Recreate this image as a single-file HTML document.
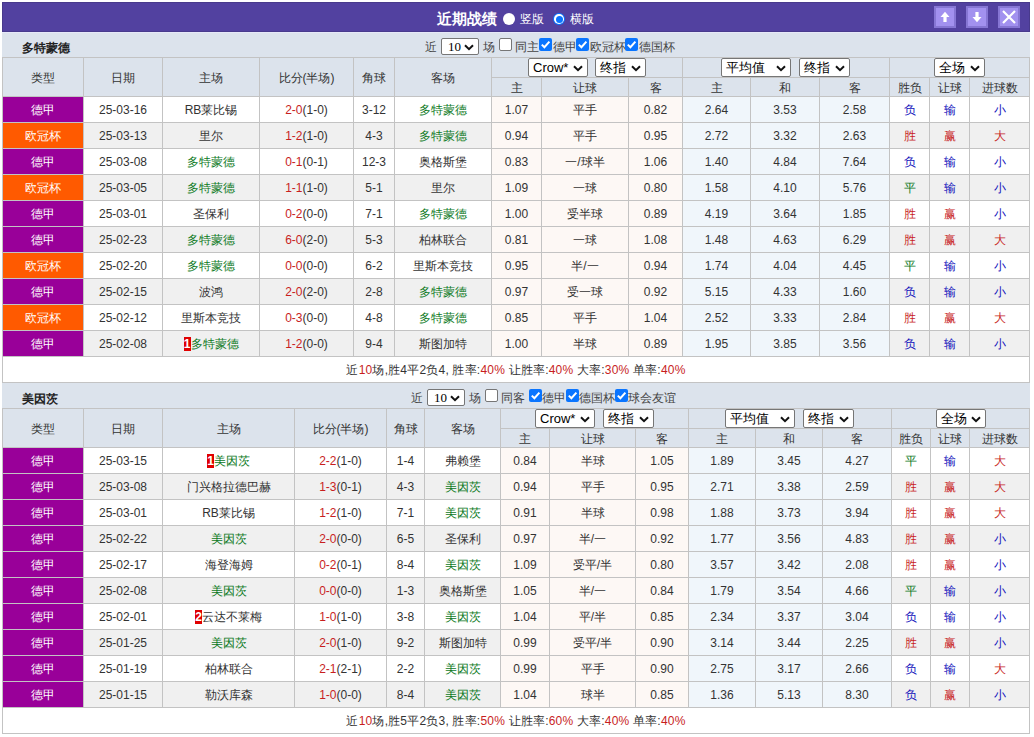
<!DOCTYPE html>
<html><head><meta charset="utf-8"><style>
*{margin:0;padding:0;box-sizing:content-box;}
html,body{width:1034px;height:737px;overflow:hidden;background:#fff;}
body{position:relative;font-family:"Liberation Sans",sans-serif;font-size:12px;color:#333333;}
body>div{position:absolute;}
.t{text-align:center;white-space:nowrap;overflow:visible;}
.g{color:#0d7a1d;}
.r{color:#c81e1e;}
.b{color:#1111bb;}
.bd{display:inline-block;background:#e00000;color:#fff;font-weight:bold;font-size:12px;line-height:14px;padding:0;width:7px;text-align:center;vertical-align:middle;margin-top:-2px;}
.sel{position:absolute;background:#fff;border:1px solid #767676;border-radius:2px;color:#000;}
.sel span{position:absolute;left:4px;top:0;white-space:nowrap;}
.cb{position:absolute;width:11px;height:11px;border:1px solid #767676;border-radius:2px;background:#fff;}
.cb.on{width:13px;height:13px;border:none;background:#0a75ff;}
.cb svg{position:absolute;left:0;top:0;}
</style></head>
<body>
<div style="left:2px;top:2px;width:1028px;height:30px;background:#5241a0;box-shadow:inset 0 0 0 1px #483a8c;"></div><div class="t" style="left:437px;top:4px;width:62px;height:30px;line-height:30px;color:#fff;font-weight:bold;font-size:15px;text-align:left;">近期战绩</div><div style="left:503px;top:13px;width:12px;height:12px;border-radius:50%;background:#fff;"></div><div class="t" style="left:520px;top:4px;width:30px;height:30px;line-height:30px;color:#fff;font-size:12px;text-align:left;">竖版</div><div style="left:553px;top:13px;width:12px;height:12px;border-radius:50%;background:#0a75ff;box-sizing:border-box;"></div><div style="left:554.2px;top:14.2px;width:9.6px;height:9.6px;border-radius:50%;background:#fff;"></div><div style="left:555.5px;top:15.5px;width:7px;height:7px;border-radius:50%;background:#0a75ff;"></div><div class="t" style="left:570px;top:4px;width:30px;height:30px;line-height:30px;color:#fff;font-size:12px;text-align:left;">横版</div><div style="left:934px;top:6px;width:18px;height:18px;border:2px solid #8676d4;background:#a291ef;"></div><svg style="left:934px;top:6px;position:absolute" width="22" height="22" viewBox="0 0 22 22"><path d="M6.5 11 L11 5.8 L15.5 11 L12.6 11 L12.6 16 L9.4 16 L9.4 11 Z" fill="#fff"/></svg><div style="left:966px;top:6px;width:18px;height:18px;border:2px solid #8676d4;background:#a291ef;"></div><svg style="left:966px;top:6px;position:absolute" width="22" height="22" viewBox="0 0 22 22"><path d="M6.5 11 L11 16.2 L15.5 11 L12.6 11 L12.6 6 L9.4 6 L9.4 11 Z" fill="#fff"/></svg><div style="left:998px;top:6px;width:18px;height:18px;border:2px solid #8676d4;background:#a291ef;"></div><svg style="left:998px;top:6px;position:absolute" width="22" height="22" viewBox="0 0 22 22"><path d="M5 5 L17 17 M17 5 L5 17" stroke="#fff" stroke-width="2.2"/></svg><div style="left:2px;top:32px;width:1028px;height:25px;background:#dce3ec;"></div><div class="t" style="left:22px;top:36px;width:80px;height:24px;line-height:24px;font-weight:bold;color:#222;text-align:left;font-size:12px;">多特蒙德</div><div class="t" style="left:425px;top:35px;width:14px;height:24px;line-height:24px;text-align:left;color:#444;">近</div><div class="sel" style="left:441px;top:38px;width:36px;height:15px;"><span style="font-size:13px;line-height:15px;font-family:Liberation Serif;left:6px;">10</span><svg width="10" height="7" viewBox="0 0 10 7" style="position:absolute;right:4px;top:5px"><path d="M1 1.2 L5 5.2 L9 1.2" fill="none" stroke="#111" stroke-width="2"/></svg></div><div class="t" style="left:483px;top:35px;width:14px;height:24px;line-height:24px;text-align:left;color:#444;">场</div><div class="cb" style="left:499px;top:38px;"></div><div class="t" style="left:515px;top:35px;width:26px;height:24px;line-height:24px;text-align:left;color:#444;">同主</div><div class="cb on" style="left:539px;top:38px;"><svg width="13" height="13" viewBox="0 0 13 13"><path d="M2.8 6.6 L5.4 9.2 L10.4 3.6" fill="none" stroke="#fff" stroke-width="2"/></svg></div><div class="t" style="left:553px;top:35px;width:26px;height:24px;line-height:24px;text-align:left;color:#444;">德甲</div><div class="cb on" style="left:576px;top:38px;"><svg width="13" height="13" viewBox="0 0 13 13"><path d="M2.8 6.6 L5.4 9.2 L10.4 3.6" fill="none" stroke="#fff" stroke-width="2"/></svg></div><div class="t" style="left:590px;top:35px;width:38px;height:24px;line-height:24px;text-align:left;color:#444;">欧冠杯</div><div class="cb on" style="left:625px;top:38px;"><svg width="13" height="13" viewBox="0 0 13 13"><path d="M2.8 6.6 L5.4 9.2 L10.4 3.6" fill="none" stroke="#fff" stroke-width="2"/></svg></div><div class="t" style="left:639px;top:35px;width:38px;height:24px;line-height:24px;text-align:left;color:#444;">德国杯</div><div style="left:2px;top:57px;width:1028px;height:39px;background:#dce3ec;"></div><div style="left:2px;top:96px;width:1028px;height:26px;background:#fff;"></div><div style="left:3px;top:97px;width:80px;height:25px;background:#990099;"></div><div style="left:492px;top:97px;width:190px;height:25px;background:#fdf8f5;"></div><div style="left:683px;top:97px;width:206px;height:25px;background:#f0f6fb;"></div><div style="left:2px;top:122px;width:1028px;height:26px;background:#f0f0f0;"></div><div style="left:3px;top:123px;width:80px;height:25px;background:#ff5a00;"></div><div style="left:492px;top:123px;width:190px;height:25px;background:#fdf8f5;"></div><div style="left:683px;top:123px;width:206px;height:25px;background:#f0f6fb;"></div><div style="left:2px;top:148px;width:1028px;height:26px;background:#fff;"></div><div style="left:3px;top:149px;width:80px;height:25px;background:#990099;"></div><div style="left:492px;top:149px;width:190px;height:25px;background:#fdf8f5;"></div><div style="left:683px;top:149px;width:206px;height:25px;background:#f0f6fb;"></div><div style="left:2px;top:174px;width:1028px;height:26px;background:#f0f0f0;"></div><div style="left:3px;top:175px;width:80px;height:25px;background:#ff5a00;"></div><div style="left:492px;top:175px;width:190px;height:25px;background:#fdf8f5;"></div><div style="left:683px;top:175px;width:206px;height:25px;background:#f0f6fb;"></div><div style="left:2px;top:200px;width:1028px;height:26px;background:#fff;"></div><div style="left:3px;top:201px;width:80px;height:25px;background:#990099;"></div><div style="left:492px;top:201px;width:190px;height:25px;background:#fdf8f5;"></div><div style="left:683px;top:201px;width:206px;height:25px;background:#f0f6fb;"></div><div style="left:2px;top:226px;width:1028px;height:26px;background:#f0f0f0;"></div><div style="left:3px;top:227px;width:80px;height:25px;background:#990099;"></div><div style="left:492px;top:227px;width:190px;height:25px;background:#fdf8f5;"></div><div style="left:683px;top:227px;width:206px;height:25px;background:#f0f6fb;"></div><div style="left:2px;top:252px;width:1028px;height:26px;background:#fff;"></div><div style="left:3px;top:253px;width:80px;height:25px;background:#ff5a00;"></div><div style="left:492px;top:253px;width:190px;height:25px;background:#fdf8f5;"></div><div style="left:683px;top:253px;width:206px;height:25px;background:#f0f6fb;"></div><div style="left:2px;top:278px;width:1028px;height:26px;background:#f0f0f0;"></div><div style="left:3px;top:279px;width:80px;height:25px;background:#990099;"></div><div style="left:492px;top:279px;width:190px;height:25px;background:#fdf8f5;"></div><div style="left:683px;top:279px;width:206px;height:25px;background:#f0f6fb;"></div><div style="left:2px;top:304px;width:1028px;height:26px;background:#fff;"></div><div style="left:3px;top:305px;width:80px;height:25px;background:#ff5a00;"></div><div style="left:492px;top:305px;width:190px;height:25px;background:#fdf8f5;"></div><div style="left:683px;top:305px;width:206px;height:25px;background:#f0f6fb;"></div><div style="left:2px;top:330px;width:1028px;height:26px;background:#f0f0f0;"></div><div style="left:3px;top:331px;width:80px;height:25px;background:#990099;"></div><div style="left:492px;top:331px;width:190px;height:25px;background:#fdf8f5;"></div><div style="left:683px;top:331px;width:206px;height:25px;background:#f0f6fb;"></div><div style="left:2px;top:356px;width:1028px;height:26px;background:#fff;"></div><div style="left:2px;top:57px;width:1028px;height:1px;background:#c3c3c3;"></div><div style="left:491px;top:77px;width:538px;height:1px;background:#c3c3c3;"></div><div style="left:2px;top:96px;width:1028px;height:1px;background:#c3c3c3;"></div><div style="left:2px;top:122px;width:1028px;height:1px;background:#c3c3c3;"></div><div style="left:2px;top:148px;width:1028px;height:1px;background:#c3c3c3;"></div><div style="left:2px;top:174px;width:1028px;height:1px;background:#c3c3c3;"></div><div style="left:2px;top:200px;width:1028px;height:1px;background:#c3c3c3;"></div><div style="left:2px;top:226px;width:1028px;height:1px;background:#c3c3c3;"></div><div style="left:2px;top:252px;width:1028px;height:1px;background:#c3c3c3;"></div><div style="left:2px;top:278px;width:1028px;height:1px;background:#c3c3c3;"></div><div style="left:2px;top:304px;width:1028px;height:1px;background:#c3c3c3;"></div><div style="left:2px;top:330px;width:1028px;height:1px;background:#c3c3c3;"></div><div style="left:2px;top:356px;width:1028px;height:1px;background:#c3c3c3;"></div><div style="left:2px;top:382px;width:1028px;height:1px;background:#c3c3c3;"></div><div style="left:2px;top:57px;width:1px;height:326px;background:#c3c3c3;"></div><div style="left:83px;top:57px;width:1px;height:299px;background:#c3c3c3;"></div><div style="left:162px;top:57px;width:1px;height:299px;background:#c3c3c3;"></div><div style="left:259px;top:57px;width:1px;height:299px;background:#c3c3c3;"></div><div style="left:353px;top:57px;width:1px;height:299px;background:#c3c3c3;"></div><div style="left:394px;top:57px;width:1px;height:299px;background:#c3c3c3;"></div><div style="left:491px;top:57px;width:1px;height:299px;background:#c3c3c3;"></div><div style="left:541px;top:77px;width:1px;height:279px;background:#c3c3c3;"></div><div style="left:628px;top:77px;width:1px;height:279px;background:#c3c3c3;"></div><div style="left:682px;top:57px;width:1px;height:299px;background:#c3c3c3;"></div><div style="left:750px;top:77px;width:1px;height:279px;background:#c3c3c3;"></div><div style="left:819px;top:77px;width:1px;height:279px;background:#c3c3c3;"></div><div style="left:889px;top:57px;width:1px;height:299px;background:#c3c3c3;"></div><div style="left:929px;top:77px;width:1px;height:279px;background:#c3c3c3;"></div><div style="left:969px;top:77px;width:1px;height:279px;background:#c3c3c3;"></div><div style="left:1029px;top:57px;width:1px;height:326px;background:#c3c3c3;"></div><div class="t" style="left:3px;top:59px;width:80px;height:38px;line-height:38px;color:#333;">类型</div><div class="t" style="left:84px;top:59px;width:78px;height:38px;line-height:38px;color:#333;">日期</div><div class="t" style="left:163px;top:59px;width:96px;height:38px;line-height:38px;color:#333;">主场</div><div class="t" style="left:260px;top:59px;width:93px;height:38px;line-height:38px;color:#333;">比分(半场)</div><div class="t" style="left:354px;top:59px;width:40px;height:38px;line-height:38px;color:#333;">角球</div><div class="t" style="left:395px;top:59px;width:96px;height:38px;line-height:38px;color:#333;">客场</div><div class="t" style="left:492px;top:79px;width:49px;height:18px;line-height:18px;color:#333;">主</div><div class="t" style="left:542px;top:79px;width:86px;height:18px;line-height:18px;color:#333;">让球</div><div class="t" style="left:629px;top:79px;width:53px;height:18px;line-height:18px;color:#333;">客</div><div class="t" style="left:683px;top:79px;width:67px;height:18px;line-height:18px;color:#333;">主</div><div class="t" style="left:751px;top:79px;width:68px;height:18px;line-height:18px;color:#333;">和</div><div class="t" style="left:820px;top:79px;width:69px;height:18px;line-height:18px;color:#333;">客</div><div class="t" style="left:890px;top:79px;width:39px;height:18px;line-height:18px;color:#333;">胜负</div><div class="t" style="left:930px;top:79px;width:39px;height:18px;line-height:18px;color:#333;">让球</div><div class="t" style="left:970px;top:79px;width:59px;height:18px;line-height:18px;color:#333;">进球数</div><div class="sel" style="left:528px;top:58px;width:58px;height:17px;"><span style="font-size:13px;line-height:17px;">Crow*</span><svg width="10" height="7" viewBox="0 0 10 7" style="position:absolute;right:4px;top:6px"><path d="M1 1.2 L5 5.2 L9 1.2" fill="none" stroke="#111" stroke-width="2"/></svg></div><div class="sel" style="left:595px;top:58px;width:49px;height:17px;"><span style="font-size:13px;line-height:17px;">终指</span><svg width="10" height="7" viewBox="0 0 10 7" style="position:absolute;right:4px;top:6px"><path d="M1 1.2 L5 5.2 L9 1.2" fill="none" stroke="#111" stroke-width="2"/></svg></div><div class="sel" style="left:721px;top:58px;width:68px;height:17px;"><span style="font-size:13px;line-height:17px;">平均值&nbsp;</span><svg width="10" height="7" viewBox="0 0 10 7" style="position:absolute;right:4px;top:6px"><path d="M1 1.2 L5 5.2 L9 1.2" fill="none" stroke="#111" stroke-width="2"/></svg></div><div class="sel" style="left:799px;top:58px;width:49px;height:17px;"><span style="font-size:13px;line-height:17px;">终指</span><svg width="10" height="7" viewBox="0 0 10 7" style="position:absolute;right:4px;top:6px"><path d="M1 1.2 L5 5.2 L9 1.2" fill="none" stroke="#111" stroke-width="2"/></svg></div><div class="sel" style="left:934px;top:58px;width:49px;height:17px;"><span style="font-size:13px;line-height:17px;">全场</span><svg width="10" height="7" viewBox="0 0 10 7" style="position:absolute;right:4px;top:6px"><path d="M1 1.2 L5 5.2 L9 1.2" fill="none" stroke="#111" stroke-width="2"/></svg></div><div class="t" style="left:3px;top:98px;width:80px;height:25px;line-height:25px;color:#fff;">德甲</div><div class="t" style="left:84px;top:98px;width:78px;height:25px;line-height:25px;">25-03-16</div><div class="t" style="left:163px;top:98px;width:96px;height:25px;line-height:25px;">RB莱比锡</div><div class="t" style="left:260px;top:98px;width:93px;height:25px;line-height:25px;"><span class="r">2-0</span>(1-0)</div><div class="t" style="left:354px;top:98px;width:40px;height:25px;line-height:25px;">3-12</div><div class="t" style="left:395px;top:98px;width:96px;height:25px;line-height:25px;"><span class="g">多特蒙德</span></div><div class="t" style="left:492px;top:98px;width:49px;height:25px;line-height:25px;">1.07</div><div class="t" style="left:542px;top:98px;width:86px;height:25px;line-height:25px;">平手</div><div class="t" style="left:629px;top:98px;width:53px;height:25px;line-height:25px;">0.82</div><div class="t" style="left:683px;top:98px;width:67px;height:25px;line-height:25px;">2.64</div><div class="t" style="left:751px;top:98px;width:68px;height:25px;line-height:25px;">3.53</div><div class="t" style="left:820px;top:98px;width:69px;height:25px;line-height:25px;">2.58</div><div class="t" style="left:890px;top:98px;width:39px;height:25px;line-height:25px;"><span class="b">负</span></div><div class="t" style="left:930px;top:98px;width:39px;height:25px;line-height:25px;"><span class="b">输</span></div><div class="t" style="left:970px;top:98px;width:59px;height:25px;line-height:25px;"><span class="b">小</span></div><div class="t" style="left:3px;top:124px;width:80px;height:25px;line-height:25px;color:#fff;">欧冠杯</div><div class="t" style="left:84px;top:124px;width:78px;height:25px;line-height:25px;">25-03-13</div><div class="t" style="left:163px;top:124px;width:96px;height:25px;line-height:25px;">里尔</div><div class="t" style="left:260px;top:124px;width:93px;height:25px;line-height:25px;"><span class="r">1-2</span>(1-0)</div><div class="t" style="left:354px;top:124px;width:40px;height:25px;line-height:25px;">4-3</div><div class="t" style="left:395px;top:124px;width:96px;height:25px;line-height:25px;"><span class="g">多特蒙德</span></div><div class="t" style="left:492px;top:124px;width:49px;height:25px;line-height:25px;">0.94</div><div class="t" style="left:542px;top:124px;width:86px;height:25px;line-height:25px;">平手</div><div class="t" style="left:629px;top:124px;width:53px;height:25px;line-height:25px;">0.95</div><div class="t" style="left:683px;top:124px;width:67px;height:25px;line-height:25px;">2.72</div><div class="t" style="left:751px;top:124px;width:68px;height:25px;line-height:25px;">3.32</div><div class="t" style="left:820px;top:124px;width:69px;height:25px;line-height:25px;">2.63</div><div class="t" style="left:890px;top:124px;width:39px;height:25px;line-height:25px;"><span class="r">胜</span></div><div class="t" style="left:930px;top:124px;width:39px;height:25px;line-height:25px;"><span class="r">赢</span></div><div class="t" style="left:970px;top:124px;width:59px;height:25px;line-height:25px;"><span class="r">大</span></div><div class="t" style="left:3px;top:150px;width:80px;height:25px;line-height:25px;color:#fff;">德甲</div><div class="t" style="left:84px;top:150px;width:78px;height:25px;line-height:25px;">25-03-08</div><div class="t" style="left:163px;top:150px;width:96px;height:25px;line-height:25px;"><span class="g">多特蒙德</span></div><div class="t" style="left:260px;top:150px;width:93px;height:25px;line-height:25px;"><span class="r">0-1</span>(0-1)</div><div class="t" style="left:354px;top:150px;width:40px;height:25px;line-height:25px;">12-3</div><div class="t" style="left:395px;top:150px;width:96px;height:25px;line-height:25px;">奥格斯堡</div><div class="t" style="left:492px;top:150px;width:49px;height:25px;line-height:25px;">0.83</div><div class="t" style="left:542px;top:150px;width:86px;height:25px;line-height:25px;">一/球半</div><div class="t" style="left:629px;top:150px;width:53px;height:25px;line-height:25px;">1.06</div><div class="t" style="left:683px;top:150px;width:67px;height:25px;line-height:25px;">1.40</div><div class="t" style="left:751px;top:150px;width:68px;height:25px;line-height:25px;">4.84</div><div class="t" style="left:820px;top:150px;width:69px;height:25px;line-height:25px;">7.64</div><div class="t" style="left:890px;top:150px;width:39px;height:25px;line-height:25px;"><span class="b">负</span></div><div class="t" style="left:930px;top:150px;width:39px;height:25px;line-height:25px;"><span class="b">输</span></div><div class="t" style="left:970px;top:150px;width:59px;height:25px;line-height:25px;"><span class="b">小</span></div><div class="t" style="left:3px;top:176px;width:80px;height:25px;line-height:25px;color:#fff;">欧冠杯</div><div class="t" style="left:84px;top:176px;width:78px;height:25px;line-height:25px;">25-03-05</div><div class="t" style="left:163px;top:176px;width:96px;height:25px;line-height:25px;"><span class="g">多特蒙德</span></div><div class="t" style="left:260px;top:176px;width:93px;height:25px;line-height:25px;"><span class="r">1-1</span>(1-0)</div><div class="t" style="left:354px;top:176px;width:40px;height:25px;line-height:25px;">5-1</div><div class="t" style="left:395px;top:176px;width:96px;height:25px;line-height:25px;">里尔</div><div class="t" style="left:492px;top:176px;width:49px;height:25px;line-height:25px;">1.09</div><div class="t" style="left:542px;top:176px;width:86px;height:25px;line-height:25px;">一球</div><div class="t" style="left:629px;top:176px;width:53px;height:25px;line-height:25px;">0.80</div><div class="t" style="left:683px;top:176px;width:67px;height:25px;line-height:25px;">1.58</div><div class="t" style="left:751px;top:176px;width:68px;height:25px;line-height:25px;">4.10</div><div class="t" style="left:820px;top:176px;width:69px;height:25px;line-height:25px;">5.76</div><div class="t" style="left:890px;top:176px;width:39px;height:25px;line-height:25px;"><span class="g">平</span></div><div class="t" style="left:930px;top:176px;width:39px;height:25px;line-height:25px;"><span class="b">输</span></div><div class="t" style="left:970px;top:176px;width:59px;height:25px;line-height:25px;"><span class="b">小</span></div><div class="t" style="left:3px;top:202px;width:80px;height:25px;line-height:25px;color:#fff;">德甲</div><div class="t" style="left:84px;top:202px;width:78px;height:25px;line-height:25px;">25-03-01</div><div class="t" style="left:163px;top:202px;width:96px;height:25px;line-height:25px;">圣保利</div><div class="t" style="left:260px;top:202px;width:93px;height:25px;line-height:25px;"><span class="r">0-2</span>(0-0)</div><div class="t" style="left:354px;top:202px;width:40px;height:25px;line-height:25px;">7-1</div><div class="t" style="left:395px;top:202px;width:96px;height:25px;line-height:25px;"><span class="g">多特蒙德</span></div><div class="t" style="left:492px;top:202px;width:49px;height:25px;line-height:25px;">1.00</div><div class="t" style="left:542px;top:202px;width:86px;height:25px;line-height:25px;">受半球</div><div class="t" style="left:629px;top:202px;width:53px;height:25px;line-height:25px;">0.89</div><div class="t" style="left:683px;top:202px;width:67px;height:25px;line-height:25px;">4.19</div><div class="t" style="left:751px;top:202px;width:68px;height:25px;line-height:25px;">3.64</div><div class="t" style="left:820px;top:202px;width:69px;height:25px;line-height:25px;">1.85</div><div class="t" style="left:890px;top:202px;width:39px;height:25px;line-height:25px;"><span class="r">胜</span></div><div class="t" style="left:930px;top:202px;width:39px;height:25px;line-height:25px;"><span class="r">赢</span></div><div class="t" style="left:970px;top:202px;width:59px;height:25px;line-height:25px;"><span class="b">小</span></div><div class="t" style="left:3px;top:228px;width:80px;height:25px;line-height:25px;color:#fff;">德甲</div><div class="t" style="left:84px;top:228px;width:78px;height:25px;line-height:25px;">25-02-23</div><div class="t" style="left:163px;top:228px;width:96px;height:25px;line-height:25px;"><span class="g">多特蒙德</span></div><div class="t" style="left:260px;top:228px;width:93px;height:25px;line-height:25px;"><span class="r">6-0</span>(2-0)</div><div class="t" style="left:354px;top:228px;width:40px;height:25px;line-height:25px;">5-3</div><div class="t" style="left:395px;top:228px;width:96px;height:25px;line-height:25px;">柏林联合</div><div class="t" style="left:492px;top:228px;width:49px;height:25px;line-height:25px;">0.81</div><div class="t" style="left:542px;top:228px;width:86px;height:25px;line-height:25px;">一球</div><div class="t" style="left:629px;top:228px;width:53px;height:25px;line-height:25px;">1.08</div><div class="t" style="left:683px;top:228px;width:67px;height:25px;line-height:25px;">1.48</div><div class="t" style="left:751px;top:228px;width:68px;height:25px;line-height:25px;">4.63</div><div class="t" style="left:820px;top:228px;width:69px;height:25px;line-height:25px;">6.29</div><div class="t" style="left:890px;top:228px;width:39px;height:25px;line-height:25px;"><span class="r">胜</span></div><div class="t" style="left:930px;top:228px;width:39px;height:25px;line-height:25px;"><span class="r">赢</span></div><div class="t" style="left:970px;top:228px;width:59px;height:25px;line-height:25px;"><span class="r">大</span></div><div class="t" style="left:3px;top:254px;width:80px;height:25px;line-height:25px;color:#fff;">欧冠杯</div><div class="t" style="left:84px;top:254px;width:78px;height:25px;line-height:25px;">25-02-20</div><div class="t" style="left:163px;top:254px;width:96px;height:25px;line-height:25px;"><span class="g">多特蒙德</span></div><div class="t" style="left:260px;top:254px;width:93px;height:25px;line-height:25px;"><span class="r">0-0</span>(0-0)</div><div class="t" style="left:354px;top:254px;width:40px;height:25px;line-height:25px;">6-2</div><div class="t" style="left:395px;top:254px;width:96px;height:25px;line-height:25px;">里斯本竞技</div><div class="t" style="left:492px;top:254px;width:49px;height:25px;line-height:25px;">0.95</div><div class="t" style="left:542px;top:254px;width:86px;height:25px;line-height:25px;">半/一</div><div class="t" style="left:629px;top:254px;width:53px;height:25px;line-height:25px;">0.94</div><div class="t" style="left:683px;top:254px;width:67px;height:25px;line-height:25px;">1.74</div><div class="t" style="left:751px;top:254px;width:68px;height:25px;line-height:25px;">4.04</div><div class="t" style="left:820px;top:254px;width:69px;height:25px;line-height:25px;">4.45</div><div class="t" style="left:890px;top:254px;width:39px;height:25px;line-height:25px;"><span class="g">平</span></div><div class="t" style="left:930px;top:254px;width:39px;height:25px;line-height:25px;"><span class="b">输</span></div><div class="t" style="left:970px;top:254px;width:59px;height:25px;line-height:25px;"><span class="b">小</span></div><div class="t" style="left:3px;top:280px;width:80px;height:25px;line-height:25px;color:#fff;">德甲</div><div class="t" style="left:84px;top:280px;width:78px;height:25px;line-height:25px;">25-02-15</div><div class="t" style="left:163px;top:280px;width:96px;height:25px;line-height:25px;">波鸿</div><div class="t" style="left:260px;top:280px;width:93px;height:25px;line-height:25px;"><span class="r">2-0</span>(2-0)</div><div class="t" style="left:354px;top:280px;width:40px;height:25px;line-height:25px;">2-8</div><div class="t" style="left:395px;top:280px;width:96px;height:25px;line-height:25px;"><span class="g">多特蒙德</span></div><div class="t" style="left:492px;top:280px;width:49px;height:25px;line-height:25px;">0.97</div><div class="t" style="left:542px;top:280px;width:86px;height:25px;line-height:25px;">受一球</div><div class="t" style="left:629px;top:280px;width:53px;height:25px;line-height:25px;">0.92</div><div class="t" style="left:683px;top:280px;width:67px;height:25px;line-height:25px;">5.15</div><div class="t" style="left:751px;top:280px;width:68px;height:25px;line-height:25px;">4.33</div><div class="t" style="left:820px;top:280px;width:69px;height:25px;line-height:25px;">1.60</div><div class="t" style="left:890px;top:280px;width:39px;height:25px;line-height:25px;"><span class="b">负</span></div><div class="t" style="left:930px;top:280px;width:39px;height:25px;line-height:25px;"><span class="b">输</span></div><div class="t" style="left:970px;top:280px;width:59px;height:25px;line-height:25px;"><span class="b">小</span></div><div class="t" style="left:3px;top:306px;width:80px;height:25px;line-height:25px;color:#fff;">欧冠杯</div><div class="t" style="left:84px;top:306px;width:78px;height:25px;line-height:25px;">25-02-12</div><div class="t" style="left:163px;top:306px;width:96px;height:25px;line-height:25px;">里斯本竞技</div><div class="t" style="left:260px;top:306px;width:93px;height:25px;line-height:25px;"><span class="r">0-3</span>(0-0)</div><div class="t" style="left:354px;top:306px;width:40px;height:25px;line-height:25px;">4-8</div><div class="t" style="left:395px;top:306px;width:96px;height:25px;line-height:25px;"><span class="g">多特蒙德</span></div><div class="t" style="left:492px;top:306px;width:49px;height:25px;line-height:25px;">0.85</div><div class="t" style="left:542px;top:306px;width:86px;height:25px;line-height:25px;">平手</div><div class="t" style="left:629px;top:306px;width:53px;height:25px;line-height:25px;">1.04</div><div class="t" style="left:683px;top:306px;width:67px;height:25px;line-height:25px;">2.52</div><div class="t" style="left:751px;top:306px;width:68px;height:25px;line-height:25px;">3.33</div><div class="t" style="left:820px;top:306px;width:69px;height:25px;line-height:25px;">2.84</div><div class="t" style="left:890px;top:306px;width:39px;height:25px;line-height:25px;"><span class="r">胜</span></div><div class="t" style="left:930px;top:306px;width:39px;height:25px;line-height:25px;"><span class="r">赢</span></div><div class="t" style="left:970px;top:306px;width:59px;height:25px;line-height:25px;"><span class="r">大</span></div><div class="t" style="left:3px;top:332px;width:80px;height:25px;line-height:25px;color:#fff;">德甲</div><div class="t" style="left:84px;top:332px;width:78px;height:25px;line-height:25px;">25-02-08</div><div class="t" style="left:163px;top:332px;width:96px;height:25px;line-height:25px;"><span class="bd">1</span><span class="g">多特蒙德</span></div><div class="t" style="left:260px;top:332px;width:93px;height:25px;line-height:25px;"><span class="r">1-2</span>(0-0)</div><div class="t" style="left:354px;top:332px;width:40px;height:25px;line-height:25px;">9-4</div><div class="t" style="left:395px;top:332px;width:96px;height:25px;line-height:25px;">斯图加特</div><div class="t" style="left:492px;top:332px;width:49px;height:25px;line-height:25px;">1.00</div><div class="t" style="left:542px;top:332px;width:86px;height:25px;line-height:25px;">半球</div><div class="t" style="left:629px;top:332px;width:53px;height:25px;line-height:25px;">0.89</div><div class="t" style="left:683px;top:332px;width:67px;height:25px;line-height:25px;">1.95</div><div class="t" style="left:751px;top:332px;width:68px;height:25px;line-height:25px;">3.85</div><div class="t" style="left:820px;top:332px;width:69px;height:25px;line-height:25px;">3.56</div><div class="t" style="left:890px;top:332px;width:39px;height:25px;line-height:25px;"><span class="b">负</span></div><div class="t" style="left:930px;top:332px;width:39px;height:25px;line-height:25px;"><span class="b">输</span></div><div class="t" style="left:970px;top:332px;width:59px;height:25px;line-height:25px;"><span class="b">小</span></div><div class="t" style="left:2px;top:358px;width:1028px;height:25px;line-height:25px;letter-spacing:0.2px;">近<span class="r">10</span>场,胜4平2负4, 胜率:<span class="r">40%</span> 让胜率:<span class="r">40%</span> 大率:<span class="r">30%</span> 单率:<span class="r">40%</span></div><div style="left:2px;top:32px;width:1028px;height:1px;background:#e6e8f8;"></div><div style="left:2px;top:383px;width:1028px;height:25px;background:#dce3ec;"></div><div class="t" style="left:22px;top:387px;width:80px;height:24px;line-height:24px;font-weight:bold;color:#222;text-align:left;font-size:12px;">美因茨</div><div class="t" style="left:411px;top:386px;width:14px;height:24px;line-height:24px;text-align:left;color:#444;">近</div><div class="sel" style="left:427px;top:389px;width:36px;height:15px;"><span style="font-size:13px;line-height:15px;font-family:Liberation Serif;left:6px;">10</span><svg width="10" height="7" viewBox="0 0 10 7" style="position:absolute;right:4px;top:5px"><path d="M1 1.2 L5 5.2 L9 1.2" fill="none" stroke="#111" stroke-width="2"/></svg></div><div class="t" style="left:469px;top:386px;width:14px;height:24px;line-height:24px;text-align:left;color:#444;">场</div><div class="cb" style="left:485px;top:389px;"></div><div class="t" style="left:501px;top:386px;width:26px;height:24px;line-height:24px;text-align:left;color:#444;">同客</div><div class="cb on" style="left:529px;top:389px;"><svg width="13" height="13" viewBox="0 0 13 13"><path d="M2.8 6.6 L5.4 9.2 L10.4 3.6" fill="none" stroke="#fff" stroke-width="2"/></svg></div><div class="t" style="left:542px;top:386px;width:26px;height:24px;line-height:24px;text-align:left;color:#444;">德甲</div><div class="cb on" style="left:566px;top:389px;"><svg width="13" height="13" viewBox="0 0 13 13"><path d="M2.8 6.6 L5.4 9.2 L10.4 3.6" fill="none" stroke="#fff" stroke-width="2"/></svg></div><div class="t" style="left:579px;top:386px;width:38px;height:24px;line-height:24px;text-align:left;color:#444;">德国杯</div><div class="cb on" style="left:615px;top:389px;"><svg width="13" height="13" viewBox="0 0 13 13"><path d="M2.8 6.6 L5.4 9.2 L10.4 3.6" fill="none" stroke="#fff" stroke-width="2"/></svg></div><div class="t" style="left:628px;top:386px;width:50px;height:24px;line-height:24px;text-align:left;color:#444;">球会友谊</div><div style="left:2px;top:408px;width:1028px;height:39px;background:#dce3ec;"></div><div style="left:2px;top:447px;width:1028px;height:26px;background:#fff;"></div><div style="left:3px;top:448px;width:80px;height:25px;background:#990099;"></div><div style="left:501px;top:448px;width:187px;height:25px;background:#fdf8f5;"></div><div style="left:689px;top:448px;width:202px;height:25px;background:#f0f6fb;"></div><div style="left:2px;top:473px;width:1028px;height:26px;background:#f0f0f0;"></div><div style="left:3px;top:474px;width:80px;height:25px;background:#990099;"></div><div style="left:501px;top:474px;width:187px;height:25px;background:#fdf8f5;"></div><div style="left:689px;top:474px;width:202px;height:25px;background:#f0f6fb;"></div><div style="left:2px;top:499px;width:1028px;height:26px;background:#fff;"></div><div style="left:3px;top:500px;width:80px;height:25px;background:#990099;"></div><div style="left:501px;top:500px;width:187px;height:25px;background:#fdf8f5;"></div><div style="left:689px;top:500px;width:202px;height:25px;background:#f0f6fb;"></div><div style="left:2px;top:525px;width:1028px;height:26px;background:#f0f0f0;"></div><div style="left:3px;top:526px;width:80px;height:25px;background:#990099;"></div><div style="left:501px;top:526px;width:187px;height:25px;background:#fdf8f5;"></div><div style="left:689px;top:526px;width:202px;height:25px;background:#f0f6fb;"></div><div style="left:2px;top:551px;width:1028px;height:26px;background:#fff;"></div><div style="left:3px;top:552px;width:80px;height:25px;background:#990099;"></div><div style="left:501px;top:552px;width:187px;height:25px;background:#fdf8f5;"></div><div style="left:689px;top:552px;width:202px;height:25px;background:#f0f6fb;"></div><div style="left:2px;top:577px;width:1028px;height:26px;background:#f0f0f0;"></div><div style="left:3px;top:578px;width:80px;height:25px;background:#990099;"></div><div style="left:501px;top:578px;width:187px;height:25px;background:#fdf8f5;"></div><div style="left:689px;top:578px;width:202px;height:25px;background:#f0f6fb;"></div><div style="left:2px;top:603px;width:1028px;height:26px;background:#fff;"></div><div style="left:3px;top:604px;width:80px;height:25px;background:#990099;"></div><div style="left:501px;top:604px;width:187px;height:25px;background:#fdf8f5;"></div><div style="left:689px;top:604px;width:202px;height:25px;background:#f0f6fb;"></div><div style="left:2px;top:629px;width:1028px;height:26px;background:#f0f0f0;"></div><div style="left:3px;top:630px;width:80px;height:25px;background:#990099;"></div><div style="left:501px;top:630px;width:187px;height:25px;background:#fdf8f5;"></div><div style="left:689px;top:630px;width:202px;height:25px;background:#f0f6fb;"></div><div style="left:2px;top:655px;width:1028px;height:26px;background:#fff;"></div><div style="left:3px;top:656px;width:80px;height:25px;background:#990099;"></div><div style="left:501px;top:656px;width:187px;height:25px;background:#fdf8f5;"></div><div style="left:689px;top:656px;width:202px;height:25px;background:#f0f6fb;"></div><div style="left:2px;top:681px;width:1028px;height:26px;background:#f0f0f0;"></div><div style="left:3px;top:682px;width:80px;height:25px;background:#990099;"></div><div style="left:501px;top:682px;width:187px;height:25px;background:#fdf8f5;"></div><div style="left:689px;top:682px;width:202px;height:25px;background:#f0f6fb;"></div><div style="left:2px;top:707px;width:1028px;height:26px;background:#fff;"></div><div style="left:2px;top:408px;width:1028px;height:1px;background:#c3c3c3;"></div><div style="left:500px;top:428px;width:529px;height:1px;background:#c3c3c3;"></div><div style="left:2px;top:447px;width:1028px;height:1px;background:#c3c3c3;"></div><div style="left:2px;top:473px;width:1028px;height:1px;background:#c3c3c3;"></div><div style="left:2px;top:499px;width:1028px;height:1px;background:#c3c3c3;"></div><div style="left:2px;top:525px;width:1028px;height:1px;background:#c3c3c3;"></div><div style="left:2px;top:551px;width:1028px;height:1px;background:#c3c3c3;"></div><div style="left:2px;top:577px;width:1028px;height:1px;background:#c3c3c3;"></div><div style="left:2px;top:603px;width:1028px;height:1px;background:#c3c3c3;"></div><div style="left:2px;top:629px;width:1028px;height:1px;background:#c3c3c3;"></div><div style="left:2px;top:655px;width:1028px;height:1px;background:#c3c3c3;"></div><div style="left:2px;top:681px;width:1028px;height:1px;background:#c3c3c3;"></div><div style="left:2px;top:707px;width:1028px;height:1px;background:#c3c3c3;"></div><div style="left:2px;top:733px;width:1028px;height:1px;background:#c3c3c3;"></div><div style="left:2px;top:408px;width:1px;height:326px;background:#c3c3c3;"></div><div style="left:83px;top:408px;width:1px;height:299px;background:#c3c3c3;"></div><div style="left:162px;top:408px;width:1px;height:299px;background:#c3c3c3;"></div><div style="left:294px;top:408px;width:1px;height:299px;background:#c3c3c3;"></div><div style="left:386px;top:408px;width:1px;height:299px;background:#c3c3c3;"></div><div style="left:424px;top:408px;width:1px;height:299px;background:#c3c3c3;"></div><div style="left:500px;top:408px;width:1px;height:299px;background:#c3c3c3;"></div><div style="left:549px;top:428px;width:1px;height:279px;background:#c3c3c3;"></div><div style="left:635px;top:428px;width:1px;height:279px;background:#c3c3c3;"></div><div style="left:688px;top:408px;width:1px;height:299px;background:#c3c3c3;"></div><div style="left:755px;top:428px;width:1px;height:279px;background:#c3c3c3;"></div><div style="left:822px;top:428px;width:1px;height:279px;background:#c3c3c3;"></div><div style="left:891px;top:408px;width:1px;height:299px;background:#c3c3c3;"></div><div style="left:930px;top:428px;width:1px;height:279px;background:#c3c3c3;"></div><div style="left:969px;top:428px;width:1px;height:279px;background:#c3c3c3;"></div><div style="left:1029px;top:408px;width:1px;height:326px;background:#c3c3c3;"></div><div class="t" style="left:3px;top:410px;width:80px;height:38px;line-height:38px;color:#333;">类型</div><div class="t" style="left:84px;top:410px;width:78px;height:38px;line-height:38px;color:#333;">日期</div><div class="t" style="left:163px;top:410px;width:131px;height:38px;line-height:38px;color:#333;">主场</div><div class="t" style="left:295px;top:410px;width:91px;height:38px;line-height:38px;color:#333;">比分(半场)</div><div class="t" style="left:387px;top:410px;width:37px;height:38px;line-height:38px;color:#333;">角球</div><div class="t" style="left:425px;top:410px;width:75px;height:38px;line-height:38px;color:#333;">客场</div><div class="t" style="left:501px;top:430px;width:48px;height:18px;line-height:18px;color:#333;">主</div><div class="t" style="left:550px;top:430px;width:85px;height:18px;line-height:18px;color:#333;">让球</div><div class="t" style="left:636px;top:430px;width:52px;height:18px;line-height:18px;color:#333;">客</div><div class="t" style="left:689px;top:430px;width:66px;height:18px;line-height:18px;color:#333;">主</div><div class="t" style="left:756px;top:430px;width:66px;height:18px;line-height:18px;color:#333;">和</div><div class="t" style="left:823px;top:430px;width:68px;height:18px;line-height:18px;color:#333;">客</div><div class="t" style="left:892px;top:430px;width:38px;height:18px;line-height:18px;color:#333;">胜负</div><div class="t" style="left:931px;top:430px;width:38px;height:18px;line-height:18px;color:#333;">让球</div><div class="t" style="left:970px;top:430px;width:59px;height:18px;line-height:18px;color:#333;">进球数</div><div class="sel" style="left:535px;top:409px;width:58px;height:17px;"><span style="font-size:13px;line-height:17px;">Crow*</span><svg width="10" height="7" viewBox="0 0 10 7" style="position:absolute;right:4px;top:6px"><path d="M1 1.2 L5 5.2 L9 1.2" fill="none" stroke="#111" stroke-width="2"/></svg></div><div class="sel" style="left:603px;top:409px;width:49px;height:17px;"><span style="font-size:13px;line-height:17px;">终指</span><svg width="10" height="7" viewBox="0 0 10 7" style="position:absolute;right:4px;top:6px"><path d="M1 1.2 L5 5.2 L9 1.2" fill="none" stroke="#111" stroke-width="2"/></svg></div><div class="sel" style="left:725px;top:409px;width:68px;height:17px;"><span style="font-size:13px;line-height:17px;">平均值&nbsp;</span><svg width="10" height="7" viewBox="0 0 10 7" style="position:absolute;right:4px;top:6px"><path d="M1 1.2 L5 5.2 L9 1.2" fill="none" stroke="#111" stroke-width="2"/></svg></div><div class="sel" style="left:803px;top:409px;width:49px;height:17px;"><span style="font-size:13px;line-height:17px;">终指</span><svg width="10" height="7" viewBox="0 0 10 7" style="position:absolute;right:4px;top:6px"><path d="M1 1.2 L5 5.2 L9 1.2" fill="none" stroke="#111" stroke-width="2"/></svg></div><div class="sel" style="left:936px;top:409px;width:48px;height:17px;"><span style="font-size:13px;line-height:17px;">全场</span><svg width="10" height="7" viewBox="0 0 10 7" style="position:absolute;right:4px;top:6px"><path d="M1 1.2 L5 5.2 L9 1.2" fill="none" stroke="#111" stroke-width="2"/></svg></div><div class="t" style="left:3px;top:449px;width:80px;height:25px;line-height:25px;color:#fff;">德甲</div><div class="t" style="left:84px;top:449px;width:78px;height:25px;line-height:25px;">25-03-15</div><div class="t" style="left:163px;top:449px;width:131px;height:25px;line-height:25px;"><span class="bd">1</span><span class="g">美因茨</span></div><div class="t" style="left:295px;top:449px;width:91px;height:25px;line-height:25px;"><span class="r">2-2</span>(1-0)</div><div class="t" style="left:387px;top:449px;width:37px;height:25px;line-height:25px;">1-4</div><div class="t" style="left:425px;top:449px;width:75px;height:25px;line-height:25px;">弗赖堡</div><div class="t" style="left:501px;top:449px;width:48px;height:25px;line-height:25px;">0.84</div><div class="t" style="left:550px;top:449px;width:85px;height:25px;line-height:25px;">半球</div><div class="t" style="left:636px;top:449px;width:52px;height:25px;line-height:25px;">1.05</div><div class="t" style="left:689px;top:449px;width:66px;height:25px;line-height:25px;">1.89</div><div class="t" style="left:756px;top:449px;width:66px;height:25px;line-height:25px;">3.45</div><div class="t" style="left:823px;top:449px;width:68px;height:25px;line-height:25px;">4.27</div><div class="t" style="left:892px;top:449px;width:38px;height:25px;line-height:25px;"><span class="g">平</span></div><div class="t" style="left:931px;top:449px;width:38px;height:25px;line-height:25px;"><span class="b">输</span></div><div class="t" style="left:970px;top:449px;width:59px;height:25px;line-height:25px;"><span class="r">大</span></div><div class="t" style="left:3px;top:475px;width:80px;height:25px;line-height:25px;color:#fff;">德甲</div><div class="t" style="left:84px;top:475px;width:78px;height:25px;line-height:25px;">25-03-08</div><div class="t" style="left:163px;top:475px;width:131px;height:25px;line-height:25px;">门兴格拉德巴赫</div><div class="t" style="left:295px;top:475px;width:91px;height:25px;line-height:25px;"><span class="r">1-3</span>(0-1)</div><div class="t" style="left:387px;top:475px;width:37px;height:25px;line-height:25px;">4-3</div><div class="t" style="left:425px;top:475px;width:75px;height:25px;line-height:25px;"><span class="g">美因茨</span></div><div class="t" style="left:501px;top:475px;width:48px;height:25px;line-height:25px;">0.94</div><div class="t" style="left:550px;top:475px;width:85px;height:25px;line-height:25px;">平手</div><div class="t" style="left:636px;top:475px;width:52px;height:25px;line-height:25px;">0.95</div><div class="t" style="left:689px;top:475px;width:66px;height:25px;line-height:25px;">2.71</div><div class="t" style="left:756px;top:475px;width:66px;height:25px;line-height:25px;">3.38</div><div class="t" style="left:823px;top:475px;width:68px;height:25px;line-height:25px;">2.59</div><div class="t" style="left:892px;top:475px;width:38px;height:25px;line-height:25px;"><span class="r">胜</span></div><div class="t" style="left:931px;top:475px;width:38px;height:25px;line-height:25px;"><span class="r">赢</span></div><div class="t" style="left:970px;top:475px;width:59px;height:25px;line-height:25px;"><span class="r">大</span></div><div class="t" style="left:3px;top:501px;width:80px;height:25px;line-height:25px;color:#fff;">德甲</div><div class="t" style="left:84px;top:501px;width:78px;height:25px;line-height:25px;">25-03-01</div><div class="t" style="left:163px;top:501px;width:131px;height:25px;line-height:25px;">RB莱比锡</div><div class="t" style="left:295px;top:501px;width:91px;height:25px;line-height:25px;"><span class="r">1-2</span>(1-0)</div><div class="t" style="left:387px;top:501px;width:37px;height:25px;line-height:25px;">7-1</div><div class="t" style="left:425px;top:501px;width:75px;height:25px;line-height:25px;"><span class="g">美因茨</span></div><div class="t" style="left:501px;top:501px;width:48px;height:25px;line-height:25px;">0.91</div><div class="t" style="left:550px;top:501px;width:85px;height:25px;line-height:25px;">半球</div><div class="t" style="left:636px;top:501px;width:52px;height:25px;line-height:25px;">0.98</div><div class="t" style="left:689px;top:501px;width:66px;height:25px;line-height:25px;">1.88</div><div class="t" style="left:756px;top:501px;width:66px;height:25px;line-height:25px;">3.73</div><div class="t" style="left:823px;top:501px;width:68px;height:25px;line-height:25px;">3.94</div><div class="t" style="left:892px;top:501px;width:38px;height:25px;line-height:25px;"><span class="r">胜</span></div><div class="t" style="left:931px;top:501px;width:38px;height:25px;line-height:25px;"><span class="r">赢</span></div><div class="t" style="left:970px;top:501px;width:59px;height:25px;line-height:25px;"><span class="r">大</span></div><div class="t" style="left:3px;top:527px;width:80px;height:25px;line-height:25px;color:#fff;">德甲</div><div class="t" style="left:84px;top:527px;width:78px;height:25px;line-height:25px;">25-02-22</div><div class="t" style="left:163px;top:527px;width:131px;height:25px;line-height:25px;"><span class="g">美因茨</span></div><div class="t" style="left:295px;top:527px;width:91px;height:25px;line-height:25px;"><span class="r">2-0</span>(0-0)</div><div class="t" style="left:387px;top:527px;width:37px;height:25px;line-height:25px;">6-5</div><div class="t" style="left:425px;top:527px;width:75px;height:25px;line-height:25px;">圣保利</div><div class="t" style="left:501px;top:527px;width:48px;height:25px;line-height:25px;">0.97</div><div class="t" style="left:550px;top:527px;width:85px;height:25px;line-height:25px;">半/一</div><div class="t" style="left:636px;top:527px;width:52px;height:25px;line-height:25px;">0.92</div><div class="t" style="left:689px;top:527px;width:66px;height:25px;line-height:25px;">1.77</div><div class="t" style="left:756px;top:527px;width:66px;height:25px;line-height:25px;">3.56</div><div class="t" style="left:823px;top:527px;width:68px;height:25px;line-height:25px;">4.83</div><div class="t" style="left:892px;top:527px;width:38px;height:25px;line-height:25px;"><span class="r">胜</span></div><div class="t" style="left:931px;top:527px;width:38px;height:25px;line-height:25px;"><span class="r">赢</span></div><div class="t" style="left:970px;top:527px;width:59px;height:25px;line-height:25px;"><span class="b">小</span></div><div class="t" style="left:3px;top:553px;width:80px;height:25px;line-height:25px;color:#fff;">德甲</div><div class="t" style="left:84px;top:553px;width:78px;height:25px;line-height:25px;">25-02-17</div><div class="t" style="left:163px;top:553px;width:131px;height:25px;line-height:25px;">海登海姆</div><div class="t" style="left:295px;top:553px;width:91px;height:25px;line-height:25px;"><span class="r">0-2</span>(0-1)</div><div class="t" style="left:387px;top:553px;width:37px;height:25px;line-height:25px;">8-4</div><div class="t" style="left:425px;top:553px;width:75px;height:25px;line-height:25px;"><span class="g">美因茨</span></div><div class="t" style="left:501px;top:553px;width:48px;height:25px;line-height:25px;">1.09</div><div class="t" style="left:550px;top:553px;width:85px;height:25px;line-height:25px;">受平/半</div><div class="t" style="left:636px;top:553px;width:52px;height:25px;line-height:25px;">0.80</div><div class="t" style="left:689px;top:553px;width:66px;height:25px;line-height:25px;">3.57</div><div class="t" style="left:756px;top:553px;width:66px;height:25px;line-height:25px;">3.42</div><div class="t" style="left:823px;top:553px;width:68px;height:25px;line-height:25px;">2.08</div><div class="t" style="left:892px;top:553px;width:38px;height:25px;line-height:25px;"><span class="r">胜</span></div><div class="t" style="left:931px;top:553px;width:38px;height:25px;line-height:25px;"><span class="r">赢</span></div><div class="t" style="left:970px;top:553px;width:59px;height:25px;line-height:25px;"><span class="b">小</span></div><div class="t" style="left:3px;top:579px;width:80px;height:25px;line-height:25px;color:#fff;">德甲</div><div class="t" style="left:84px;top:579px;width:78px;height:25px;line-height:25px;">25-02-08</div><div class="t" style="left:163px;top:579px;width:131px;height:25px;line-height:25px;"><span class="g">美因茨</span></div><div class="t" style="left:295px;top:579px;width:91px;height:25px;line-height:25px;"><span class="r">0-0</span>(0-0)</div><div class="t" style="left:387px;top:579px;width:37px;height:25px;line-height:25px;">1-3</div><div class="t" style="left:425px;top:579px;width:75px;height:25px;line-height:25px;">奥格斯堡</div><div class="t" style="left:501px;top:579px;width:48px;height:25px;line-height:25px;">1.05</div><div class="t" style="left:550px;top:579px;width:85px;height:25px;line-height:25px;">半/一</div><div class="t" style="left:636px;top:579px;width:52px;height:25px;line-height:25px;">0.84</div><div class="t" style="left:689px;top:579px;width:66px;height:25px;line-height:25px;">1.79</div><div class="t" style="left:756px;top:579px;width:66px;height:25px;line-height:25px;">3.54</div><div class="t" style="left:823px;top:579px;width:68px;height:25px;line-height:25px;">4.66</div><div class="t" style="left:892px;top:579px;width:38px;height:25px;line-height:25px;"><span class="g">平</span></div><div class="t" style="left:931px;top:579px;width:38px;height:25px;line-height:25px;"><span class="b">输</span></div><div class="t" style="left:970px;top:579px;width:59px;height:25px;line-height:25px;"><span class="b">小</span></div><div class="t" style="left:3px;top:605px;width:80px;height:25px;line-height:25px;color:#fff;">德甲</div><div class="t" style="left:84px;top:605px;width:78px;height:25px;line-height:25px;">25-02-01</div><div class="t" style="left:163px;top:605px;width:131px;height:25px;line-height:25px;"><span class="bd">2</span>云达不莱梅</div><div class="t" style="left:295px;top:605px;width:91px;height:25px;line-height:25px;"><span class="r">1-0</span>(1-0)</div><div class="t" style="left:387px;top:605px;width:37px;height:25px;line-height:25px;">3-8</div><div class="t" style="left:425px;top:605px;width:75px;height:25px;line-height:25px;"><span class="g">美因茨</span></div><div class="t" style="left:501px;top:605px;width:48px;height:25px;line-height:25px;">1.04</div><div class="t" style="left:550px;top:605px;width:85px;height:25px;line-height:25px;">平/半</div><div class="t" style="left:636px;top:605px;width:52px;height:25px;line-height:25px;">0.85</div><div class="t" style="left:689px;top:605px;width:66px;height:25px;line-height:25px;">2.34</div><div class="t" style="left:756px;top:605px;width:66px;height:25px;line-height:25px;">3.37</div><div class="t" style="left:823px;top:605px;width:68px;height:25px;line-height:25px;">3.04</div><div class="t" style="left:892px;top:605px;width:38px;height:25px;line-height:25px;"><span class="b">负</span></div><div class="t" style="left:931px;top:605px;width:38px;height:25px;line-height:25px;"><span class="b">输</span></div><div class="t" style="left:970px;top:605px;width:59px;height:25px;line-height:25px;"><span class="b">小</span></div><div class="t" style="left:3px;top:631px;width:80px;height:25px;line-height:25px;color:#fff;">德甲</div><div class="t" style="left:84px;top:631px;width:78px;height:25px;line-height:25px;">25-01-25</div><div class="t" style="left:163px;top:631px;width:131px;height:25px;line-height:25px;"><span class="g">美因茨</span></div><div class="t" style="left:295px;top:631px;width:91px;height:25px;line-height:25px;"><span class="r">2-0</span>(1-0)</div><div class="t" style="left:387px;top:631px;width:37px;height:25px;line-height:25px;">9-2</div><div class="t" style="left:425px;top:631px;width:75px;height:25px;line-height:25px;">斯图加特</div><div class="t" style="left:501px;top:631px;width:48px;height:25px;line-height:25px;">0.99</div><div class="t" style="left:550px;top:631px;width:85px;height:25px;line-height:25px;">受平/半</div><div class="t" style="left:636px;top:631px;width:52px;height:25px;line-height:25px;">0.90</div><div class="t" style="left:689px;top:631px;width:66px;height:25px;line-height:25px;">3.14</div><div class="t" style="left:756px;top:631px;width:66px;height:25px;line-height:25px;">3.44</div><div class="t" style="left:823px;top:631px;width:68px;height:25px;line-height:25px;">2.25</div><div class="t" style="left:892px;top:631px;width:38px;height:25px;line-height:25px;"><span class="r">胜</span></div><div class="t" style="left:931px;top:631px;width:38px;height:25px;line-height:25px;"><span class="r">赢</span></div><div class="t" style="left:970px;top:631px;width:59px;height:25px;line-height:25px;"><span class="b">小</span></div><div class="t" style="left:3px;top:657px;width:80px;height:25px;line-height:25px;color:#fff;">德甲</div><div class="t" style="left:84px;top:657px;width:78px;height:25px;line-height:25px;">25-01-19</div><div class="t" style="left:163px;top:657px;width:131px;height:25px;line-height:25px;">柏林联合</div><div class="t" style="left:295px;top:657px;width:91px;height:25px;line-height:25px;"><span class="r">2-1</span>(2-1)</div><div class="t" style="left:387px;top:657px;width:37px;height:25px;line-height:25px;">2-2</div><div class="t" style="left:425px;top:657px;width:75px;height:25px;line-height:25px;"><span class="g">美因茨</span></div><div class="t" style="left:501px;top:657px;width:48px;height:25px;line-height:25px;">0.99</div><div class="t" style="left:550px;top:657px;width:85px;height:25px;line-height:25px;">平手</div><div class="t" style="left:636px;top:657px;width:52px;height:25px;line-height:25px;">0.90</div><div class="t" style="left:689px;top:657px;width:66px;height:25px;line-height:25px;">2.75</div><div class="t" style="left:756px;top:657px;width:66px;height:25px;line-height:25px;">3.17</div><div class="t" style="left:823px;top:657px;width:68px;height:25px;line-height:25px;">2.66</div><div class="t" style="left:892px;top:657px;width:38px;height:25px;line-height:25px;"><span class="b">负</span></div><div class="t" style="left:931px;top:657px;width:38px;height:25px;line-height:25px;"><span class="b">输</span></div><div class="t" style="left:970px;top:657px;width:59px;height:25px;line-height:25px;"><span class="r">大</span></div><div class="t" style="left:3px;top:683px;width:80px;height:25px;line-height:25px;color:#fff;">德甲</div><div class="t" style="left:84px;top:683px;width:78px;height:25px;line-height:25px;">25-01-15</div><div class="t" style="left:163px;top:683px;width:131px;height:25px;line-height:25px;">勒沃库森</div><div class="t" style="left:295px;top:683px;width:91px;height:25px;line-height:25px;"><span class="r">1-0</span>(0-0)</div><div class="t" style="left:387px;top:683px;width:37px;height:25px;line-height:25px;">8-4</div><div class="t" style="left:425px;top:683px;width:75px;height:25px;line-height:25px;"><span class="g">美因茨</span></div><div class="t" style="left:501px;top:683px;width:48px;height:25px;line-height:25px;">1.04</div><div class="t" style="left:550px;top:683px;width:85px;height:25px;line-height:25px;">球半</div><div class="t" style="left:636px;top:683px;width:52px;height:25px;line-height:25px;">0.85</div><div class="t" style="left:689px;top:683px;width:66px;height:25px;line-height:25px;">1.36</div><div class="t" style="left:756px;top:683px;width:66px;height:25px;line-height:25px;">5.13</div><div class="t" style="left:823px;top:683px;width:68px;height:25px;line-height:25px;">8.30</div><div class="t" style="left:892px;top:683px;width:38px;height:25px;line-height:25px;"><span class="b">负</span></div><div class="t" style="left:931px;top:683px;width:38px;height:25px;line-height:25px;"><span class="r">赢</span></div><div class="t" style="left:970px;top:683px;width:59px;height:25px;line-height:25px;"><span class="b">小</span></div><div class="t" style="left:2px;top:709px;width:1028px;height:25px;line-height:25px;letter-spacing:0.2px;">近<span class="r">10</span>场,胜5平2负3, 胜率:<span class="r">50%</span> 让胜率:<span class="r">60%</span> 大率:<span class="r">40%</span> 单率:<span class="r">40%</span></div>
</body></html>
